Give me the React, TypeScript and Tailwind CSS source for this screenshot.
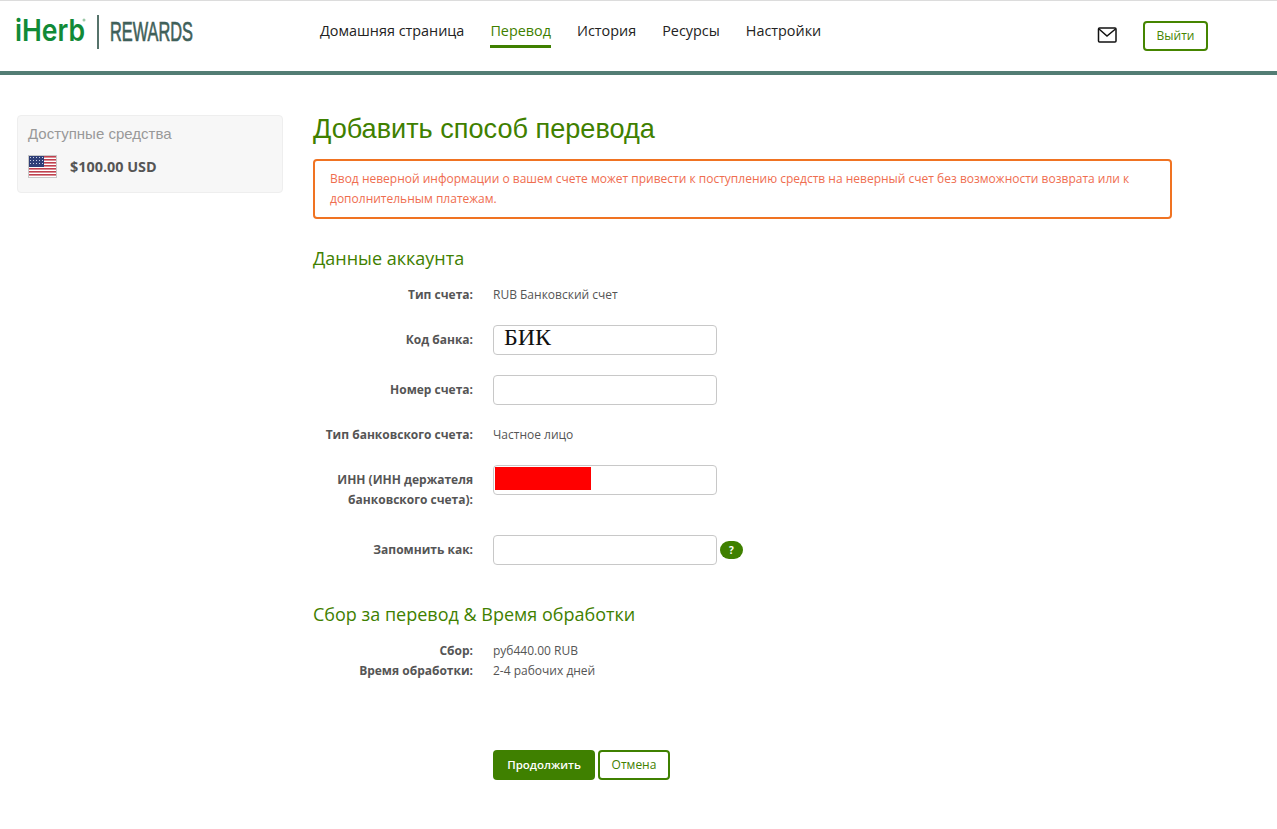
const navItems = ["Домашняя страница", "Перевод", "История", "Ресурсы", "Настройки"];

function Logo() {
  return (
    <svg width="190" height="36" viewBox="0 0 190 36" className="block overflow-visible">
      <text x="0" y="27" fontFamily="Inter" fontWeight="600" fontSize="30" fill="#118a37" textLength="70" lengthAdjust="spacingAndGlyphs">
        iHerb
      </text>
      <circle cx="69" cy="6" r="1.5" fill="#9cc9a8" />
      <rect x="82" y="1" width="2" height="34" fill="#56736b" />
      <text x="95" y="27" fontFamily="Liberation Sans" fontSize="28" fill="#3f6059" stroke="#3f6059" strokeWidth="0.7" textLength="83" lengthAdjust="spacingAndGlyphs">
        REWARDS
      </text>
    </svg>
  );
}

function Flag() {
  return (
    <svg width="29" height="23" viewBox="0 0 29 23" className="block">
      <rect width="29" height="23" fill="#c8c8c8" />
      <rect x="1" y="1" width="27" height="21" fill="#fff" />
      {[1, 4, 7, 10, 13, 16, 19].map((y) => (
        <rect key={y} x="1" y={y} width="27" height="1.6" fill="#c0424f" />
      ))}
      <rect x="1" y="1" width="15" height="11" fill="#2f3f78" />
      {[3, 6, 9].map((y) =>
        [3, 6, 9, 12, 15].map((x) => <rect key={`${x}-${y}`} x={x - 1} y={y - 1} width="1" height="1" fill="#c9cfe6" />)
      )}
    </svg>
  );
}

function MailIcon() {
  return (
    <svg width="20" height="16" viewBox="0 0 20 16" fill="none" stroke="#111" strokeWidth="1.5" className="block">
      <rect x="1.5" y="1" width="17.5" height="14" rx="1" />
      <path d="M2 2 L10 9 L18.5 2" />
    </svg>
  );
}

function Row({ label, className, children }: { label: React.ReactNode; className?: string; children: React.ReactNode }) {
  return (
    <div className={`flex items-start ${className ?? ""}`}>
      <div className="w-[160px] shrink-0 text-right font-bold text-[#555] text-[12px] leading-[20px]">{label}</div>
      <div className="ml-[20px] flex items-center text-[12px] leading-[20px] text-[#555]">{children}</div>
    </div>
  );
}

function Field({ children }: { children?: React.ReactNode }) {
  return <div className="relative h-[30px] w-[224px] rounded-[4px] border border-[#c8c8c8] bg-white">{children}</div>;
}

export default function App() {
  return (
    <div className="min-h-[829px] bg-white font-['Open_Sans',sans-serif] text-[#555]">
      <header className="flex h-[75px] items-start border-t border-b-4 border-t-[#dcdcdc] border-b-[#537d74]">
        <div className="ml-[15px] mt-[13px] w-[305px] shrink-0">
          <Logo />
        </div>
        <nav className="flex gap-[26px] text-[14.4px] leading-[20px] text-[#222]">
          {navItems.map((item) => (
            <div
              key={item}
              className={
                item === "Перевод"
                  ? "mt-[20px] h-[27px] border-b-[3px] border-[#3f8000] text-[#3f8000]"
                  : "mt-[20px]"
              }
            >
              {item}
            </div>
          ))}
        </nav>
        <div className="ml-auto mt-[26px]">
          <MailIcon />
        </div>
        <button className="ml-[26px] mr-[69px] mt-[20px] h-[30px] w-[65px] rounded-[4px] border-2 border-[#458500] text-[12px] text-[#458500]">
          Выйти
        </button>
      </header>

      <div className="flex items-start pt-[40px]">
        <aside className="ml-[17px] h-[78px] w-[266px] shrink-0 rounded-[4px] border border-[#eeeeee] bg-[#f7f7f7] px-[10px] pt-[8px]">
          <div className="font-['Liberation_Sans',sans-serif] text-[15px] leading-[20px] text-[#999]">Доступные средства</div>
          <div className="mt-[11px] flex items-center">
            <Flag />
            <span className="ml-[13px] text-[14.4px] font-bold text-[#555]">$100.00 USD</span>
          </div>
        </aside>

        <main className="ml-[30px] w-[859px]">
          <h1 className="font-['Liberation_Sans',sans-serif] text-[27.1px] leading-[28px] text-[#3f8000]">Добавить способ перевода</h1>
          <div className="mt-[16px] h-[60px] rounded-[4px] border-2 border-[#f07322] px-[15px] pt-[8px] text-[12px] leading-[20px] text-[#ef6d4f]">
            Ввод неверной информации о вашем счете может привести к поступлению средств на неверный счет без возможности возврата или к дополнительным платежам.
          </div>

          <h2 className="mt-[27px] text-[18px] leading-[24px] text-[#3f8000]">Данные аккаунта</h2>
          <Row label="Тип счета:" className="mt-[15px]">
            RUB Банковский счет
          </Row>
          <Row label={<span className="block pt-[5px]">Код банка:</span>} className="mt-[20px]">
            <Field>
              <span className="absolute left-[10px] top-[-3px] font-['Liberation_Serif',serif] text-[24px] leading-[28px] text-[#111]">БИК</span>
            </Field>
          </Row>
          <Row label={<span className="block pt-[5px]">Номер счета:</span>} className="mt-[20px]">
            <Field />
          </Row>
          <Row label="Тип банковского счета:" className="mt-[20px]">
            Частное лицо
          </Row>
          <Row label={<>ИНН (ИНН держателя<br />банковского счета):</>} className="mt-[20px] h-[50px] pt-[5px]">
            <div className="-mt-[5px]">
              <Field>
                <div className="absolute left-[1px] top-[1px] h-[23px] w-[96px] bg-[#ff0000]" />
              </Field>
            </div>
          </Row>
          <Row label={<span className="block pt-[5px]">Запомнить как:</span>} className="mt-[20px]">
            <Field />
            <span className="ml-[3px] flex h-[18px] w-[23px] items-center justify-center rounded-full bg-[#3f8000] text-[10px] font-bold text-white">?</span>
          </Row>

          <h2 className="mt-[37px] text-[18px] leading-[24px] text-[#3f8000]">Сбор за перевод &amp; Время обработки</h2>
          <Row label="Сбор:" className="mt-[15px]">
            руб440.00 RUB
          </Row>
          <Row label="Время обработки:">2-4 рабочих дней</Row>

          <div className="ml-[180px] mt-[69px] flex gap-[3px]">
            <button className="h-[30px] w-[102px] rounded-[4px] bg-[#3f8000] text-[11.5px] font-semibold text-white">Продолжить</button>
            <button className="h-[30px] w-[72px] rounded-[4px] border-2 border-[#3f8000] bg-white text-[12px] text-[#3f8000]">Отмена</button>
          </div>
        </main>
      </div>
    </div>
  );
}
